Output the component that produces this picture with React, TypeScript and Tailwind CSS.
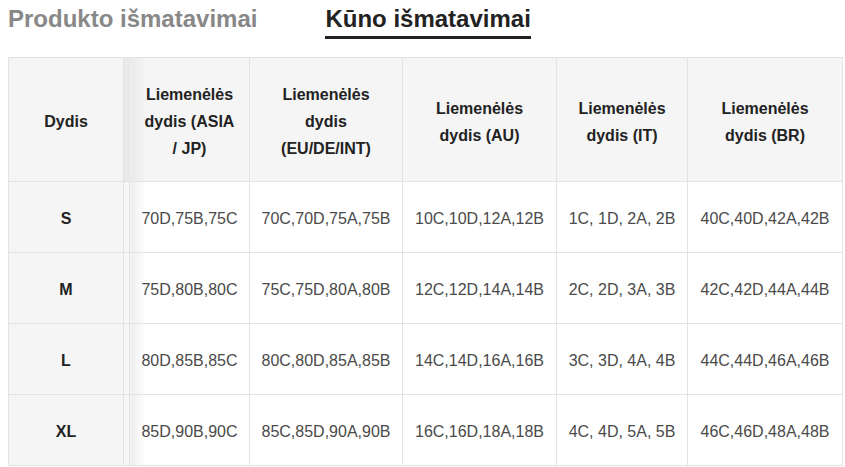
import React from "react";

const headers = [
  "Liemenėlės dydis (ASIA / JP)",
  "Liemenėlės dydis (EU/DE/INT)",
  "Liemenėlės dydis (AU)",
  "Liemenėlės dydis (IT)",
  "Liemenėlės dydis (BR)",
];

const rows: [string, string[]][] = [
  ["S", ["70D,75B,75C", "70C,70D,75A,75B", "10C,10D,12A,12B", "1C, 1D, 2A, 2B", "40C,40D,42A,42B"]],
  ["M", ["75D,80B,80C", "75C,75D,80A,80B", "12C,12D,14A,14B", "2C, 2D, 3A, 3B", "42C,42D,44A,44B"]],
  ["L", ["80D,85B,85C", "80C,80D,85A,85B", "14C,14D,16A,16B", "3C, 3D, 4A, 4B", "44C,44D,46A,46B"]],
  ["XL", ["85D,90B,90C", "85C,85D,90A,90B", "16C,16D,18A,18B", "4C, 4D, 5A, 5B", "46C,46D,48A,48B"]],
];

const headerBreaks: React.ReactNode[] = [
  <>Liemenėlės<br />dydis (ASIA<br />/ JP)</>,
  <>Liemenėlės<br />dydis<br />(EU/DE/INT)</>,
  <>Liemenėlės<br />dydis (AU)</>,
  <>Liemenėlės<br />dydis (IT)</>,
  <>Liemenėlės<br />dydis (BR)</>,
];

export default function App() {
  return (
    <div className="bg-white w-[845px] h-[467px] overflow-hidden font-['Liberation_Sans',Arial,sans-serif]">
      <div className="flex items-start pl-[8px]">
        <div className="pt-[5px] text-[24px] leading-[28px] font-bold text-[#888888]">
          Produkto išmatavimai
        </div>
        <div className="ml-[68px] pt-[5px] pb-[3px] border-b-[3px] border-[#222222] text-[24px] leading-[28px] font-bold text-[#222222]">
          Kūno išmatavimai
        </div>
      </div>
      <div className="mt-[18px] ml-[8px]">
        <table className="table-fixed border-collapse w-[835px] text-[16px] leading-[27px] text-center">
          <colgroup>
            <col className="w-[115px]" />
            <col className="w-[6px]" />
            <col className="w-[120px]" />
            <col className="w-[153px]" />
            <col className="w-[154px]" />
            <col className="w-[131px]" />
            <col className="w-[155px]" />
          </colgroup>
          <thead>
            <tr className="h-[124px]">
              <th className="border border-[#e3e3e3] bg-[#f5f5f5] font-bold text-[#222222] pt-[4px]">Dydis</th>
              <th className="border border-[#e3e3e3] bg-[#e9e9e9]"></th>
              {headerBreaks.map((h, i) => (
                <th
                  key={i}
                  title={headers[i]}
                  className={
                    "border border-[#e3e3e3] font-bold text-[#222222] px-[8px] pt-[4px] " +
                    (i === 0
                      ? "bg-[linear-gradient(to_right,#e9e9e9,#f5f5f5_16px)]"
                      : "bg-[#f5f5f5]")
                  }
                >
                  {h}
                </th>
              ))}
            </tr>
          </thead>
          <tbody>
            {rows.map(([size, vals]) => (
              <tr key={size} className="h-[71px]">
                <td className="border border-[#e3e3e3] bg-[#f5f5f5] font-bold text-[#222222] pt-[3px]">{size}</td>
                <td className="border border-[#e3e3e3] bg-[#f7f7f7]"></td>
                {vals.map((v, i) => (
                  <td
                    key={i}
                    className={
                      "border border-[#e3e3e3] text-[#4a4a4a] whitespace-nowrap pt-[3px] " +
                      (i === 0
                        ? "bg-[linear-gradient(to_right,#eeeeee,#ffffff_16px)]"
                        : "bg-white")
                    }
                  >
                    {v}
                  </td>
                ))}
              </tr>
            ))}
          </tbody>
        </table>
      </div>
    </div>
  );
}
